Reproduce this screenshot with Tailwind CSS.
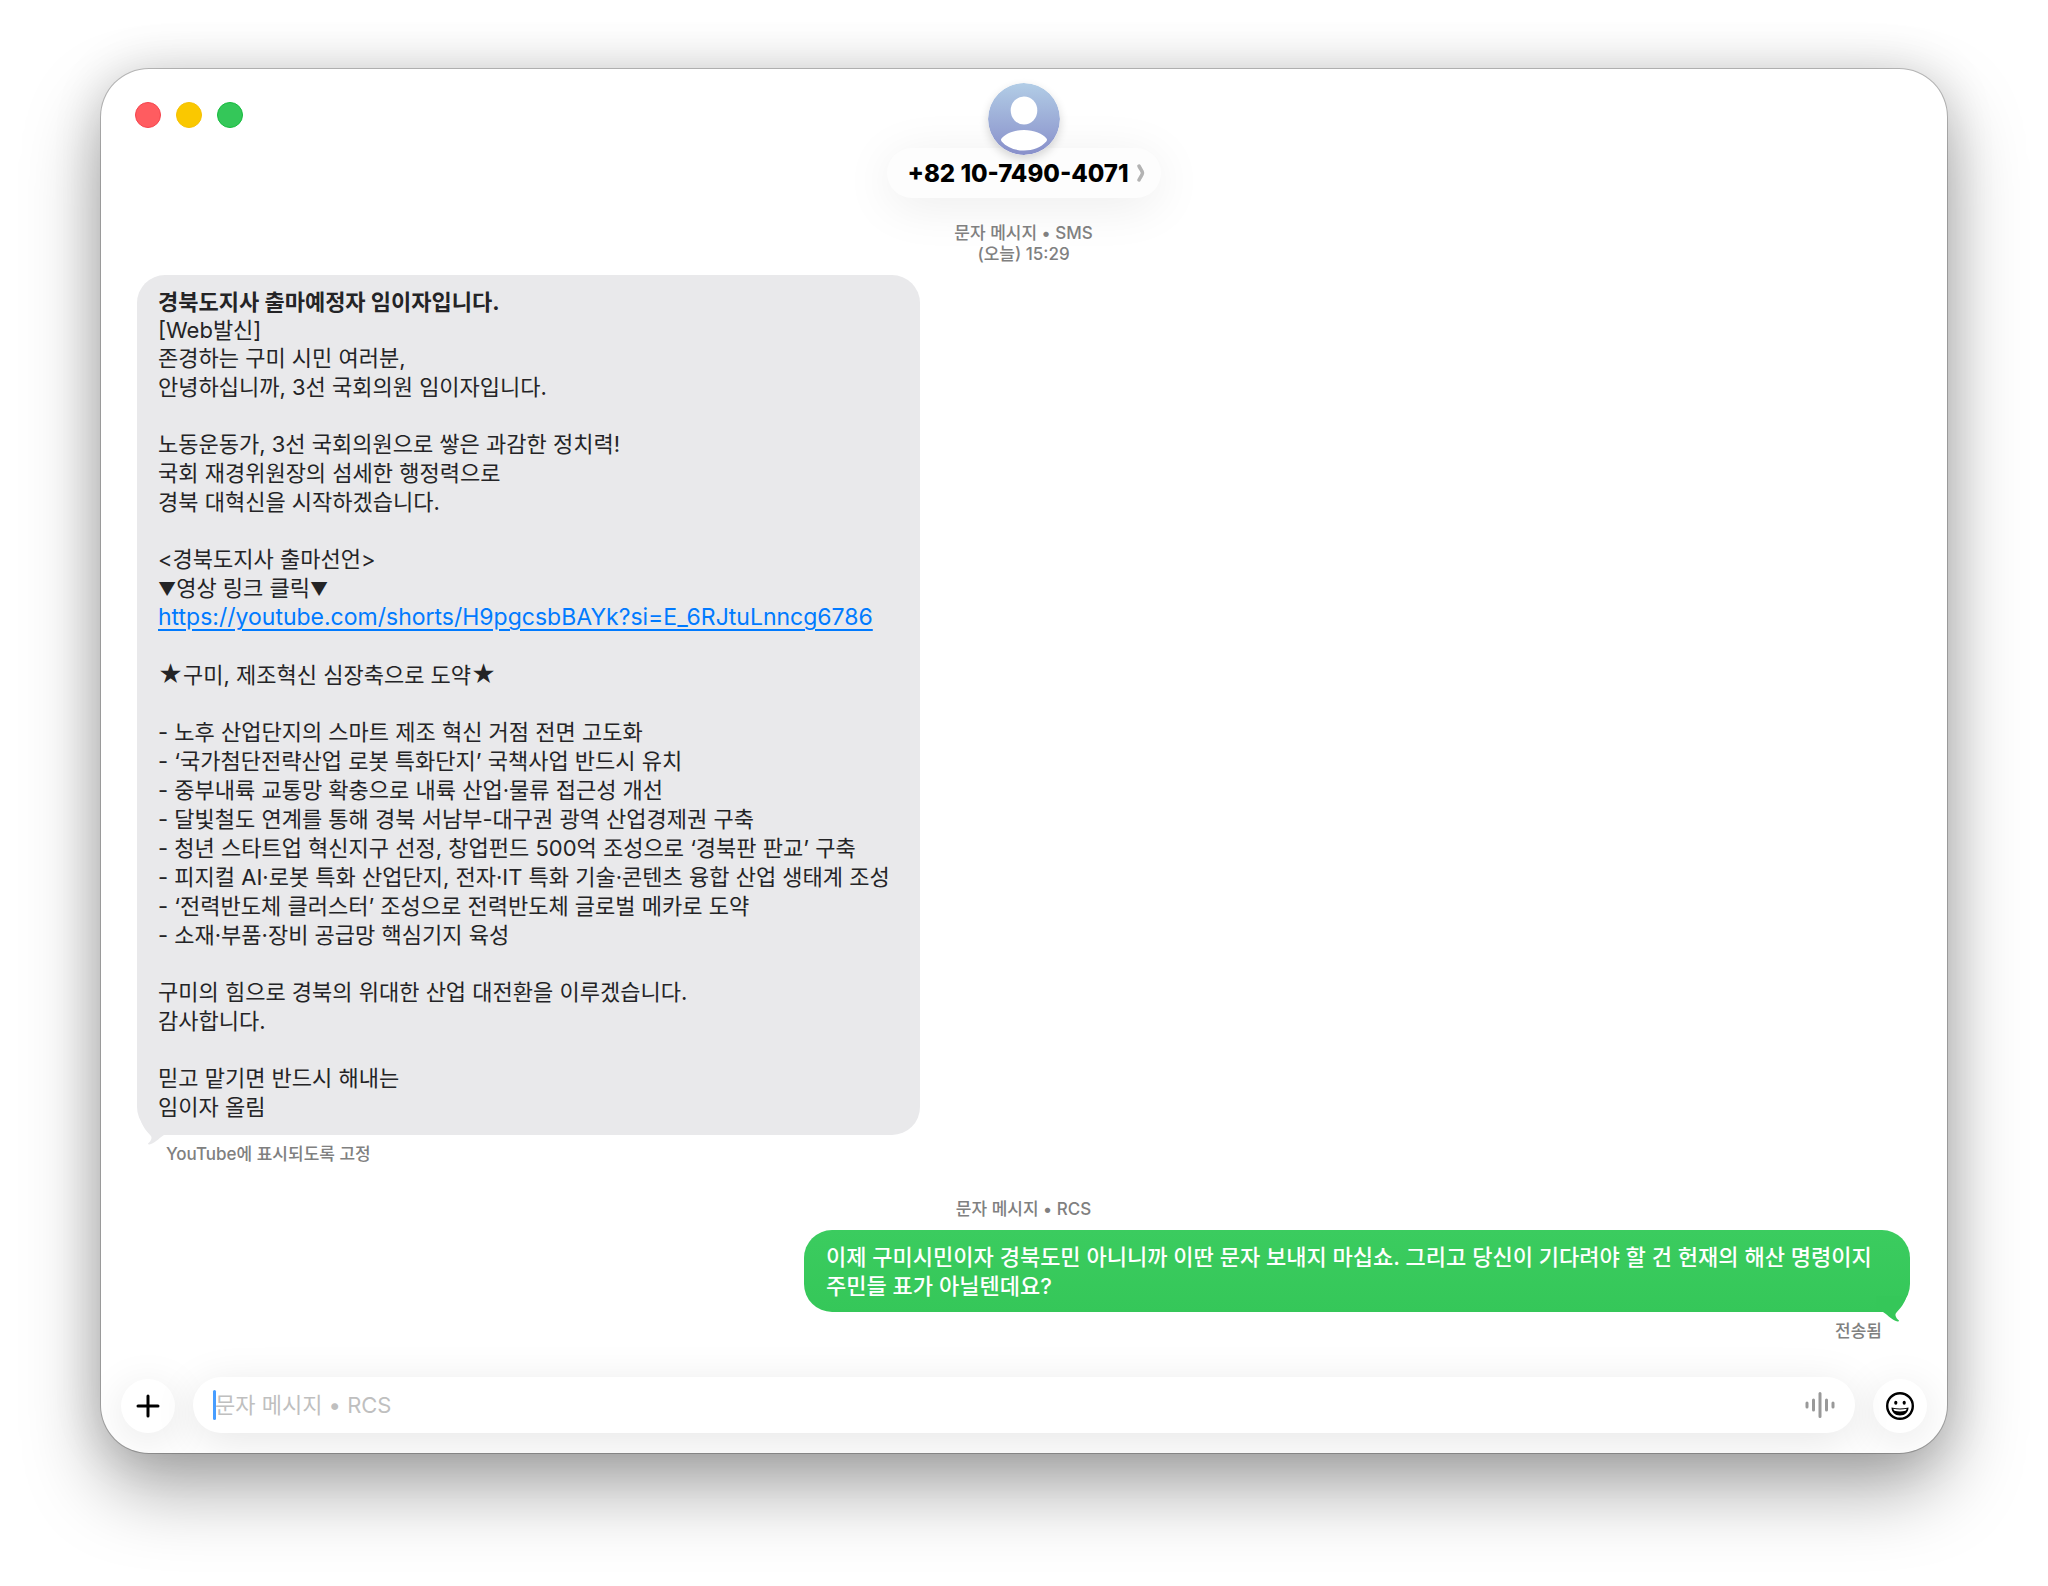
<!DOCTYPE html>
<html lang="ko">
<head>
<meta charset="utf-8">
<meta name="viewport" content="width=device-width, initial-scale=1">
<title>메시지</title>
<script src="https://cdn.jsdelivr.net/npm/@tailwindcss/browser@4"></script>
</head>
<body class="flex min-h-screen flex-col bg-white px-[101px] pt-[69px] pb-[133px] font-['Inter','Noto_Sans_CJK_KR',sans-serif] text-[22px] leading-[29px] text-[#242426]">
<div class="flex flex-1 flex-col overflow-hidden rounded-[48px] bg-white shadow-[0_0_0_1px_rgba(0,0,0,0.22),0_36px_76px_rgba(0,0,0,0.34),0_0_50px_rgba(0,0,0,0.14)]">

  <header class="grid grid-cols-[1fr_auto_1fr] items-start pt-[14px]">
    <div class="flex gap-[15px] pt-[19px] pl-[34px]">
      <button aria-label="닫기" class="size-[26px] rounded-full border border-[#f5434c] bg-[#ff5c60]"></button>
      <button aria-label="최소화" class="size-[26px] rounded-full border border-[#f5c000] bg-[#fac800]"></button>
      <button aria-label="확대" class="size-[26px] rounded-full border border-[#14bb3c] bg-[#34c759]"></button>
    </div>
    <div class="flex flex-col items-center">
      <svg class="z-10 size-[72px] rounded-full shadow-[0_4px_10px_rgba(0,0,0,0.16)]" viewBox="0 0 72 72" aria-hidden="true">
        <defs><linearGradient id="av" x1="0" y1="0" x2="0" y2="1"><stop offset="0" stop-color="#b2cde6"/><stop offset="1" stop-color="#888fca"/></linearGradient></defs>
        <circle cx="36" cy="36" r="36" fill="url(#av)"/>
        <ellipse cx="36" cy="27.500" rx="13.300" ry="14" fill="#fff"/>
        <path d="M36 47c10 0 19 4 22.500 8.500.8 1 .6 2-.2 3C53 64.500 45 67.500 36 67.500s-17-3-22.300-9c-.8-1-1-2-.2-3C17 51 26 47 36 47Z" fill="#fff"/>
      </svg>
      <button class="-mt-[7px] flex h-[50px] items-center gap-2 rounded-full bg-[#fdfdfd] pr-4 pl-5 text-[24px] font-extrabold text-black shadow-[0_8px_50px_rgba(0,0,0,0.08)]">
        <span>+82 10-7490-4071</span>
        <svg class="h-[18px] w-2" viewBox="0 0 8 18" fill="none" stroke="#b3b3b3" stroke-width="3.500" stroke-linecap="round" stroke-linejoin="round" aria-hidden="true"><path d="M2 2c1 2.500 3.500 5 3.500 7S3 13.500 2 16"/></svg>
      </button>
    </div>
  </header>

  <main class="flex flex-col pr-[37px] pl-9">
    <p class="mt-[25px] text-center text-[17px] leading-[21px] font-medium text-[#808080]">문자 메시지 • SMS<br>(오늘) 15:29</p>

    <article class="relative mt-[10px] w-[783px] self-start rounded-[28px] bg-[#e9e9eb] pt-[13px] pr-4 pb-[13px] pl-[21px] whitespace-nowrap">
      <h1 class="leading-7 font-bold">경북도지사 출마예정자 임이자입니다.</h1>
      <p class="leading-7">[Web발신]</p>
      <p>존경하는 구미 시민 여러분,<br>안녕하십니까, 3선 국회의원 임이자입니다.</p>
      <p class="mt-7">노동운동가, 3선 국회의원으로 쌓은 과감한 정치력!<br>국회 재경위원장의 섬세한 행정력으로<br>경북 대혁신을 시작하겠습니다.</p>
      <p class="mt-7">&lt;경북도지사 출마선언&gt;<br><span class="text-[18px] leading-none">▼</span>영상 링크 클릭<span class="text-[18px] leading-none">▼</span><br><a href="https://youtube.com/shorts/H9pgcsbBAYk?si=E_6RJtuLnncg6786" class="text-[23px] text-[#007aff] underline decoration-2 underline-offset-4">https://youtube.com/shorts/H9pgcsbBAYk?si=E_6RJtuLnncg6786</a></p>
      <p class="mt-[29px]"><span class="text-[24px] leading-none">★</span>구미, 제조혁신 심장축으로 도약<span class="text-[24px] leading-none">★</span></p>
      <p class="mt-7">- 노후 산업단지의 스마트 제조 혁신 거점 전면 고도화<br>- ‘국가첨단전략산업 로봇 특화단지’ 국책사업 반드시 유치<br>- 중부내륙 교통망 확충으로 내륙 산업·물류 접근성 개선<br>- 달빛철도 연계를 통해 경북 서남부-대구권 광역 산업경제권 구축<br>- 청년 스타트업 혁신지구 선정, 창업펀드 500억 조성으로 ‘경북판 판교’ 구축<br>- 피지컬 AI·로봇 특화 산업단지, 전자·IT 특화 기술·콘텐츠 융합 산업 생태계 조성<br>- ‘전력반도체 클러스터’ 조성으로 전력반도체 글로벌 메카로 도약<br>- 소재·부품·장비 공급망 핵심기지 육성</p>
      <p class="mt-7">구미의 힘으로 경북의 위대한 산업 대전환을 이루겠습니다.<br>감사합니다.</p>
      <p class="mt-7">믿고 맡기면 반드시 해내는<br>임이자 올림</p>
      <svg class="absolute top-full left-0 -mt-4 h-7 w-9" viewBox="0 -16 36 28" fill="#e9e9eb" aria-hidden="true"><path d="M3.500-16C5-9 9.500-4 13.500.5c2 2 1 5-2.200 7.700-.8.800 0 1.300 1 1.200C17 9 21 4 27 0L34-2V-16Z"/></svg>
    </article>
    <p class="mt-[9px] pl-[29px] text-[17px] leading-[21px] font-medium text-[#808080]">YouTube에 표시되도록 고정</p>

    <p class="mt-[34px] text-center text-[17px] leading-[21px] font-medium text-[#808080]">문자 메시지 • RCS</p>
    <article class="relative mt-[10px] w-[1106px] self-end rounded-[28px] bg-linear-to-b from-[#3bcc5f] to-[#35c759] pt-[13px] pb-[11px] pl-[22px] font-medium whitespace-nowrap text-white">
      <p>이제 구미시민이자 경북도민 아니니까 이딴 문자 보내지 마십쇼. 그리고 당신이 기다려야 할 건 헌재의 해산 명령이지<br>주민들 표가 아닐텐데요?</p>
      <svg class="absolute top-full right-0 -mt-4 h-7 w-9 -scale-x-100" viewBox="0 -16 36 28" fill="#35c759" aria-hidden="true"><path d="M3.500-16C5-9 9.500-4 13.500.5c2 2 1 5-2.200 7.700-.8.800 0 1.300 1 1.200C17 9 21 4 27 0L34-2V-16Z"/></svg>
    </article>
    <p class="mt-[9px] pr-7 text-right text-[17px] leading-[21px] font-medium text-[#808080]">전송됨</p>
  </main>

  <footer class="mt-auto flex items-end gap-[18px] px-5 pt-8 pb-5">
    <button aria-label="추가" class="flex size-[54px] shrink-0 items-center justify-center rounded-full bg-white shadow-[0_8px_44px_rgba(0,0,0,0.1)]">
      <svg class="size-6" viewBox="0 0 24 24" stroke="#000" stroke-width="3" stroke-linecap="round" aria-hidden="true"><path d="M12 2v20M2 12h20"/></svg>
    </button>
    <div class="relative flex h-14 flex-1 items-center rounded-full bg-white pr-5 pl-[22px] shadow-[0_8px_44px_rgba(0,0,0,0.1)]">
      <input type="text" aria-label="메시지" placeholder="문자 메시지 • RCS" class="h-full min-w-0 flex-1 bg-transparent text-[22px] outline-none placeholder:text-[#bfbfbf]">
      <span class="absolute left-5 h-[30px] w-[3px] rounded-full bg-[#479dff]"></span>
      <svg class="h-7 w-[30px]" viewBox="0 0 30 28" stroke="#999" stroke-width="3" stroke-linecap="round" aria-hidden="true"><path d="M2 12v4M8.500 9v10M15 2.500v23M21.500 9v10M28 12v4"/></svg>
    </div>
    <button aria-label="이모티콘" class="flex size-[54px] shrink-0 items-center justify-center rounded-full bg-white shadow-[0_8px_44px_rgba(0,0,0,0.1)]">
      <svg class="size-7" viewBox="0 0 28 28" aria-hidden="true"><circle cx="14" cy="14" r="12.800" fill="none" stroke="#000" stroke-width="2.400"/><ellipse cx="9.800" cy="10.800" rx="1.600" ry="2"/><ellipse cx="18.200" cy="10.800" rx="1.600" ry="2"/><path d="M5.500 15.500c5.500 1.300 11.500 1.300 17 0 0 4.500-3.500 8-8.500 8s-8.500-3.500-8.500-8Z"/><path d="M7.300 16.800c4.500 1 9 1 13.400 0-.3 1-.7 1.500-1.200 2-3.500.8-7.500.8-11 0-.5-.5-.9-1-1.200-2Z" fill="#fff"/></svg>
    </button>
  </footer>
</div>
</body>
</html>
